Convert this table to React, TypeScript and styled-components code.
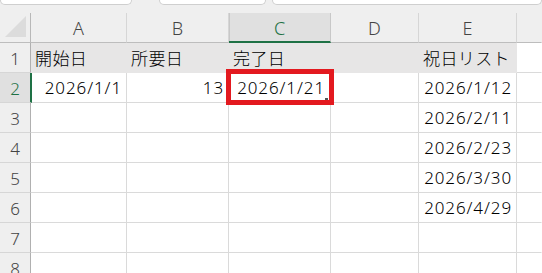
import React from "react";
import styled, { createGlobalStyle } from "styled-components";

const GlobalStyle = createGlobalStyle`
  html, body {
    margin: 0;
    padding: 0;
    background: #ffffff;
  }
  body {
    font-family: "Noto Sans CJK JP", "Noto Sans", sans-serif;
    overflow: hidden;
  }
`;

const GREEN = "#1e7145";
const GRID = "#dadada";

const columns = ["A", "B", "C", "D", "E"];
const selectedCol = 2;
const selectedRow = 2;

type CellData = { text?: string; align?: "left" | "right" };

const rows: CellData[][] = [
  [
    { text: "開始日", align: "left" },
    { text: "所要日", align: "left" },
    { text: "完了日", align: "left" },
    {},
    { text: "祝日リスト", align: "left" },
  ],
  [{ text: "2026/1/1", align: "right" }, { text: "13", align: "right" }, { text: "2026/1/21", align: "right" }, {}, { text: "2026/1/12", align: "right" }],
  [{}, {}, {}, {}, { text: "2026/2/11", align: "right" }],
  [{}, {}, {}, {}, { text: "2026/2/23", align: "right" }],
  [{}, {}, {}, {}, { text: "2026/3/30", align: "right" }],
  [{}, {}, {}, {}, { text: "2026/4/29", align: "right" }],
  [{}, {}, {}, {}, {}],
  [{}, {}, {}, {}, {}],
];

export default function App() {
  return (
    <>
      <GlobalStyle />
      <Window>
        <TopStrip>
          <FieldBox $width={130} />
          <Spacer $width={27} />
          <FieldBox $width={105} />
          <Spacer $width={6} />
          <FieldBox $grow />
        </TopStrip>
        <Sheet>
          <Corner>
            <svg width="22" height="22" viewBox="0 0 22 22">
              <polygon points="21,0 21,21 0,21" fill="#dcdcdc" />
            </svg>
          </Corner>
          {columns.map((c, i) => (
            <ColHeader key={c} $selected={i === selectedCol}>
              {c}
            </ColHeader>
          ))}
          <ColHeader $trailing />

          {rows.map((row, r) => (
            <React.Fragment key={r}>
              <RowHeader $selected={r + 1 === selectedRow}>{r + 1}</RowHeader>
              {row.map((cell, c) => {
                const active = r + 1 === selectedRow && c === selectedCol;
                return (
                  <Cell
                    key={c}
                    $fill={r === 0}
                    $align={cell.align ?? "left"}
                    $numeric={cell.align === "right"}
                    $active={active}
                  >
                    {cell.text}
                    {active && (
                      <>
                        <FillHandle />
                        <Highlight />
                      </>
                    )}
                  </Cell>
                );
              })}
              <Cell $align="left" $trailing />
            </React.Fragment>
          ))}
        </Sheet>
      </Window>
    </>
  );
}

const Window = styled.div`
  width: 542px;
  height: 273px;
  overflow: hidden;
  background: #ffffff;
`;

const TopStrip = styled.div`
  height: 13px;
  display: flex;
  align-items: flex-start;
  background: #efefef;
`;

const FieldBox = styled.div<{ $width?: number; $grow?: boolean }>`
  height: 4px;
  width: ${({ $width }) => ($width ? `${$width}px` : "auto")};
  flex: ${({ $grow }) => ($grow ? "1" : "none")};
  background: #ffffff;
  border: 1px solid #cfcfcf;
  border-top: none;
  border-radius: 0 0 5px 5px;
`;

const Spacer = styled.div<{ $width: number }>`
  width: ${({ $width }) => $width}px;
  flex: none;
`;

const Sheet = styled.div`
  display: grid;
  grid-template-columns: 31px 96px 102px 102px 88px 98px 1fr;
  grid-auto-rows: 30px;
`;

const Corner = styled.div`
  background: #efefef;
  border-right: 1px solid #b8b8b8;
  border-bottom: 1px solid #bdbdbd;
  display: flex;
  align-items: flex-end;
  justify-content: flex-end;
  padding: 0 3px 4px 0;
`;

const ColHeader = styled.div<{ $selected?: boolean; $trailing?: boolean }>`
  position: relative;
  display: flex;
  align-items: center;
  justify-content: center;
  background: ${({ $selected }) => ($selected ? "#e0e0e0" : "#efefef")};
  color: ${({ $selected }) => ($selected ? GREEN : "#444444")};
  font-family: "Noto Sans", "Noto Sans CJK JP", sans-serif;
  font-size: 18px;
  font-weight: 300;
  padding-top: 1px;
  border-bottom: ${({ $selected }) =>
    $selected ? `2px solid ${GREEN}` : "1px solid #bdbdbd"};
  border-right: 1px solid
    ${({ $selected, $trailing }) =>
      $selected ? "#c8c8c8" : $trailing ? "transparent" : "#d6d6d6"};
  box-shadow: ${({ $selected }) => ($selected ? "inset 1px 0 0 #c8c8c8" : "none")};
`;

const RowHeader = styled.div<{ $selected?: boolean }>`
  display: flex;
  align-items: center;
  justify-content: center;
  background: ${({ $selected }) => ($selected ? "#e0e0e0" : "#efefef")};
  color: ${({ $selected }) => ($selected ? GREEN : "#444444")};
  font-family: "Noto Sans", "Noto Sans CJK JP", sans-serif;
  font-size: 17px;
  font-weight: 300;
  padding-top: 1px;
  border-bottom: 1px solid #d6d6d6;
  border-right: ${({ $selected }) =>
    $selected ? `2px solid ${GREEN}` : "1px solid #b0b0b0"};
  margin-right: ${({ $selected }) => ($selected ? "-1px" : "0")};
  z-index: ${({ $selected }) => ($selected ? 1 : 0)};
`;

const Cell = styled.div<{
  $fill?: boolean;
  $align: "left" | "right";
  $numeric?: boolean;
  $trailing?: boolean;
  $active?: boolean;
}>`
  position: relative;
  z-index: ${({ $active }) => ($active ? 2 : 0)};
  display: flex;
  align-items: center;
  justify-content: ${({ $align }) => ($align === "right" ? "flex-end" : "flex-start")};
  padding: ${({ $align, $active }) =>
    $align === "right" ? `0 ${$active ? 5 : 4}px 0 0` : "0 0 0 4px"};
  background: ${({ $fill }) => ($fill ? "#e7e6e6" : "#ffffff")};
  color: #000000;
  font-family: ${({ $numeric }) =>
    $numeric ? `"Noto Sans", "Noto Sans CJK JP", sans-serif` : `"Noto Sans CJK JP", sans-serif`};
  font-size: 17px;
  font-weight: 300;
  letter-spacing: ${({ $numeric }) => ($numeric ? "0.9px" : "0.4px")};
  white-space: nowrap;
  border-bottom: 1px solid ${({ $fill }) => ($fill ? "#e7e6e6" : GRID)};
  border-right: 1px solid
    ${({ $fill, $trailing }) => ($fill ? "#e7e6e6" : $trailing ? "transparent" : GRID)};
`;

const Highlight = styled.div`
  position: absolute;
  top: -4px;
  left: -3px;
  right: -4px;
  bottom: -3px;
  border: 5px solid #e3191f;
  pointer-events: none;
`;

const FillHandle = styled.div`
  position: absolute;
  right: 2px;
  bottom: 1px;
  width: 3px;
  height: 3px;
  background: #555555;
`;
